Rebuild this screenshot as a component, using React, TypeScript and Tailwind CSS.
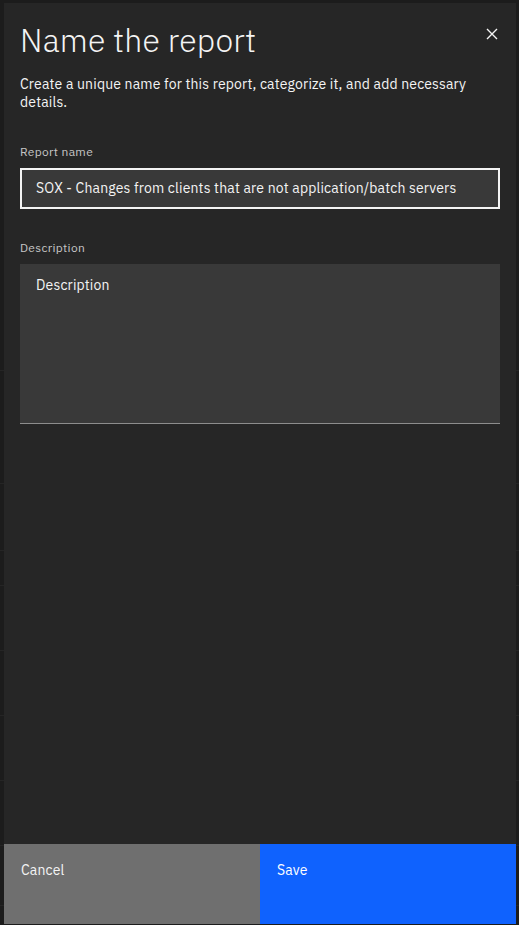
import React from 'react';

const font = { fontFamily: '"IBM Plex Sans", Inter, "Noto Sans", sans-serif' };

const Backdrop = () => (
  <div className="absolute inset-0 bg-[#1c1c1c]">
    {[370, 483, 550, 585, 650, 715, 780, 845, 905].map((y) => (
      <div key={y} className="absolute left-0 right-0 h-px bg-[#252525]" style={{ top: y }} />
    ))}
  </div>
);

const CloseIcon = () => (
  <svg width="12" height="12" viewBox="0 0 12 12" fill="none">
    <path d="M1 1L11 11M11 1L1 11" stroke="#f4f4f4" strokeWidth="1.4" />
  </svg>
);

export default function App() {
  return (
    <div className="relative w-[519px] h-[925px] overflow-hidden" style={font}>
      <Backdrop />
      <div className="absolute left-[4px] top-[3px] w-[512px] h-[921px] bg-[#262626] flex flex-col">
        <div className="flex-1 flex flex-col px-4">
          <div className="flex justify-between items-start pt-[17px]">
            <h2 className="text-[32px] leading-[40px] font-light text-[#f4f4f4] tracking-[0.2px]">
              Name the report
            </h2>
            <button className="mt-[2px] -mr-[4px] w-[24px] h-[24px] flex items-center justify-center">
              <CloseIcon />
            </button>
          </div>
          <p className="mt-[15px] w-[470px] text-[14px] leading-[18px] tracking-[0.16px] text-[#f4f4f4]">
            Create a unique name for this report, categorize it, and add necessary details.
          </p>

          <label className="mt-[33px] text-[12px] leading-[16px] tracking-[0.32px] text-[#c6c6c6]">Report name</label>
          <div className="mt-[8px] h-[41px] border-2 border-[#f4f4f4] bg-[#393939] flex items-center pl-[14px]">
            <span className="text-[14px] tracking-[0.16px] text-[#f4f4f4]">
              SOX - Changes from clients that are not application/batch servers
            </span>
          </div>

          <label className="mt-[31px] text-[12px] leading-[16px] tracking-[0.32px] text-[#c6c6c6]">Description</label>
          <div className="mt-[8px] h-[160px] bg-[#393939] border-b border-[#8d8d8d] pl-[16px] pt-[8px]">
            <span className="text-[14px] tracking-[0.16px] text-[#f4f4f4]">Description</span>
          </div>
        </div>

        <div className="flex h-[80px]">
          <button className="w-1/2 bg-[#6f6f6f] text-left text-[14px] tracking-[0.16px] text-[#f4f4f4] pl-[17px] pt-[16px] self-stretch flex items-start">
            Cancel
          </button>
          <button className="w-1/2 bg-[#0f62fe] text-left text-[14px] tracking-[0.16px] text-white pl-[17px] pt-[16px] self-stretch flex items-start">
            Save
          </button>
        </div>
      </div>
    </div>
  );
}
